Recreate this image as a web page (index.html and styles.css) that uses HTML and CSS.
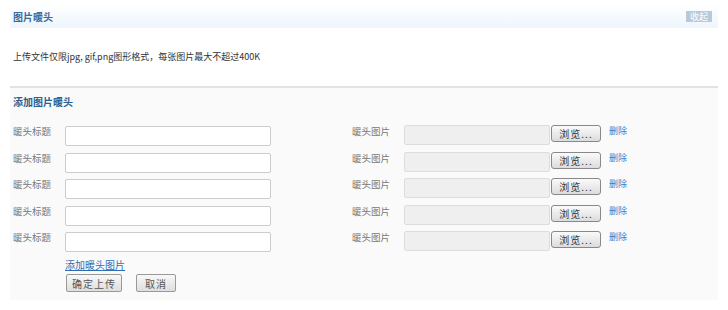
FILE: index.html
```html
<!DOCTYPE html>
<html lang="zh-CN">
<head>
    <meta charset="UTF-8">
    <title>图片暖头</title>
    <link rel="stylesheet" href="styles.css">
</head>
<body>
    <div class="panel">
        <div class="panel-head">
            <span class="panel-title">图片暖头</span>
            <span class="toggle">收起</span>
        </div>
        <p class="tip">上传文件仅限jpg, gif,png图形格式，每张图片最大不超过400K</p>
        <div class="box">
            <h3 class="box-title">添加图片暖头</h3>
            <div class="rows">
                <div class="row">
                    <label class="lbl">暖头标题</label>
                    <input class="txt" type="text">
                    <label class="lbl lbl-pic">暖头图片</label>
                    <span class="file"></span>
                    <button class="browse">浏览...</button>
                    <a class="del" href="#">删除</a>
                </div>
                <div class="row">
                    <label class="lbl">暖头标题</label>
                    <input class="txt" type="text">
                    <label class="lbl lbl-pic">暖头图片</label>
                    <span class="file"></span>
                    <button class="browse">浏览...</button>
                    <a class="del" href="#">删除</a>
                </div>
                <div class="row">
                    <label class="lbl">暖头标题</label>
                    <input class="txt" type="text">
                    <label class="lbl lbl-pic">暖头图片</label>
                    <span class="file"></span>
                    <button class="browse">浏览...</button>
                    <a class="del" href="#">删除</a>
                </div>
                <div class="row">
                    <label class="lbl">暖头标题</label>
                    <input class="txt" type="text">
                    <label class="lbl lbl-pic">暖头图片</label>
                    <span class="file"></span>
                    <button class="browse">浏览...</button>
                    <a class="del" href="#">删除</a>
                </div>
                <div class="row">
                    <label class="lbl">暖头标题</label>
                    <input class="txt" type="text">
                    <label class="lbl lbl-pic">暖头图片</label>
                    <span class="file"></span>
                    <button class="browse">浏览...</button>
                    <a class="del" href="#">删除</a>
                </div>
            </div>
            <div class="actions">
                <a class="add" href="#">添加暖头图片</a>
                <div class="btns">
                    <button class="btn btn-ok">确定上传</button>
                    <button class="btn btn-cancel">取消</button>
                </div>
            </div>
        </div>
    </div>
</body>
</html>
```

FILE: styles.css
```css
body {
    margin: 0;
    background: #fff;
    font-family: "Noto Sans CJK SC", "DejaVu Sans", sans-serif;
    font-size: 10px;
    color: #333;
}
.panel {
    margin: 0 10px;
    padding-top: 4px;
}
.panel-head {
    height: 24px;
    display: flex;
    align-items: center;
    justify-content: space-between;
    padding: 0 6px 0 3px;
    background: linear-gradient(to bottom, #ffffff 0%, #eef5fd 100%);
}
.panel-title {
    color: #3a6b9c;
    font-weight: bold;
    font-size: 10px;
}
.toggle {
    background: #b8cad9;
    color: #fff;
    font-size: 9px;
    line-height: 11px;
    padding: 0 4px;
}
.tip {
    margin: 0;
    padding: 22px 3px 0;
    height: 36px;
    color: #333;
    font-size: 9px;
    line-height: 14px;
}
.box {
    border-top: 2px solid #e2e2e2;
    background: #fafafa;
    padding: 6px 3px 6px;
    height: 200px;
}
.box-title {
    margin: 0 0 15px;
    font-size: 10px;
    color: #2e5f92;
    font-weight: bold;
    line-height: 16px;
}
.rows {
    display: flex;
    flex-direction: column;
    gap: 6.5px;
}
.row {
    display: flex;
    align-items: flex-start;
    height: 20px;
}
.lbl {
    width: 52px;
    color: #777;
    font-size: 9.5px;
    line-height: 12px;
}
.txt {
    width: 206px;
    height: 20px;
    box-sizing: border-box;
    border: 1px solid #ccc;
    border-radius: 2px;
    background: #fff;
    margin: 1px 0 0;
}
.lbl-pic {
    margin-left: 81px;
}
.file {
    width: 144px;
    height: 18px;
    border: 1px solid #ddd;
    border-radius: 2px;
    background: #efefef;
}
.browse {
    margin-left: 1px;
    width: 50px;
    height: 17px;
    padding: 0;
    font-family: inherit;
    font-size: 10px;
    color: #333;
    border: 1px solid #888;
    border-radius: 3px;
    background: linear-gradient(to bottom, #fafafa, #dcdcdc);
    letter-spacing: 1px;
}
.del {
    margin-left: 8px;
    color: #3d7ac9;
    text-decoration: none;
    font-size: 9px;
    line-height: 12px;
}
.actions {
    padding-left: 52px;
    margin-top: 6px;
}
.add {
    color: #2f6db5;
    text-decoration: underline;
    font-size: 10px;
}
.btns {
    display: flex;
    gap: 14px;
    margin-top: 2px;
    padding-left: 1px;
}
.btn {
    height: 18px;
    padding: 0;
    font-family: inherit;
    font-size: 10px;
    color: #555;
    border: 1px solid #999;
    border-radius: 2px;
    background: linear-gradient(to bottom, #f8f8f8, #dedede);
    letter-spacing: 1px;
}
.btn-ok {
    width: 56px;
}
.btn-cancel {
    width: 40px;
}
```
